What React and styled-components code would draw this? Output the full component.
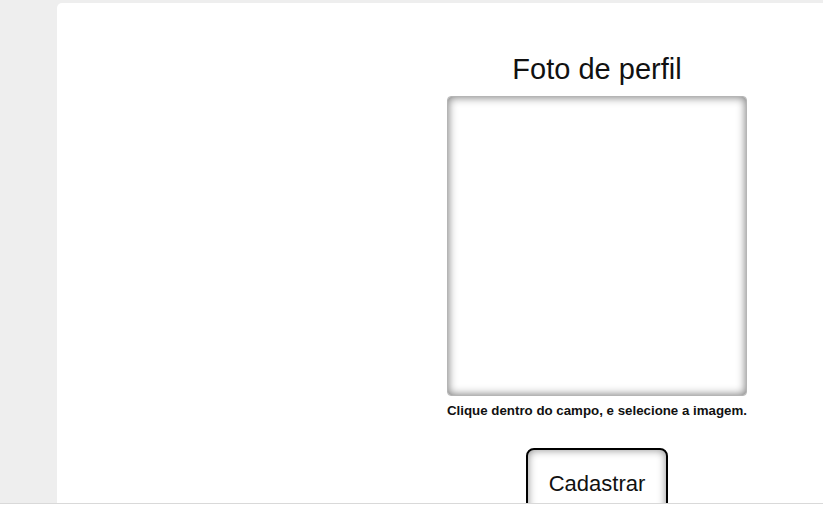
import React from 'react';
import styled, { createGlobalStyle } from 'styled-components';

const GlobalStyle = createGlobalStyle`
  html, body {
    margin: 0;
    padding: 0;
    overflow: hidden;
    background-color: #eeeeee;
    font-family: Arial, "Liberation Sans", sans-serif;
  }
`;

const Page = styled.div`
  display: flex;
  flex-direction: column;
  height: 513px;
  width: 823px;
`;

const Main = styled.div`
  flex: 1;
  overflow: hidden;
  padding: 3px 0 0 57px;
`;

const Card = styled.div`
  width: 1000px;
  height: 100%;
  background-color: white;
  border-radius: 5px 5px 0 0;
  display: grid;
  grid-template-columns: 390px 300px;
`;

const PhotoColumn = styled.div`
  display: flex;
  flex-direction: column;
  align-items: center;
  padding-top: 49px;
`;

const Title = styled.h2`
  margin: 0 0 10px;
  font-size: 29px;
  font-weight: normal;
  line-height: 34px;
  color: #111;
`;

const PhotoField = styled.div`
  width: 300px;
  height: 300px;
  box-sizing: border-box;
  border: 1px solid #b5b5b5;
  border-radius: 4px;
  box-shadow: inset 0 0 10px #6f6f6f;
  cursor: pointer;
`;

const Hint = styled.p`
  margin: 7px 0 0;
  font-size: 13.3px;
  line-height: 16px;
  font-weight: bold;
  color: #111;
  white-space: nowrap;
`;

const SubmitButton = styled.button`
  margin-top: 29px;
  padding: 21px 21px 18px;
  border: 2px solid #000;
  border-radius: 8px;
  background: white;
  box-shadow: inset 0 0 8px #8a8a8a;
  font-family: Arial, "Liberation Sans", sans-serif;
  font-size: 22px;
  color: #111;
`;

const Footer = styled.div`
  height: 9px;
  background: white;
  border-top: 1px solid #d9d9d9;
`;

const App = () => {
  return (
    <>
      <GlobalStyle />
      <Page>
        <Main>
          <Card>
            <div />
            <PhotoColumn>
              <Title>Foto de perfil</Title>
              <PhotoField />
              <Hint>Clique dentro do campo, e selecione a imagem.</Hint>
              <SubmitButton>Cadastrar</SubmitButton>
            </PhotoColumn>
          </Card>
        </Main>
        <Footer />
      </Page>
    </>
  );
};

export default App;
